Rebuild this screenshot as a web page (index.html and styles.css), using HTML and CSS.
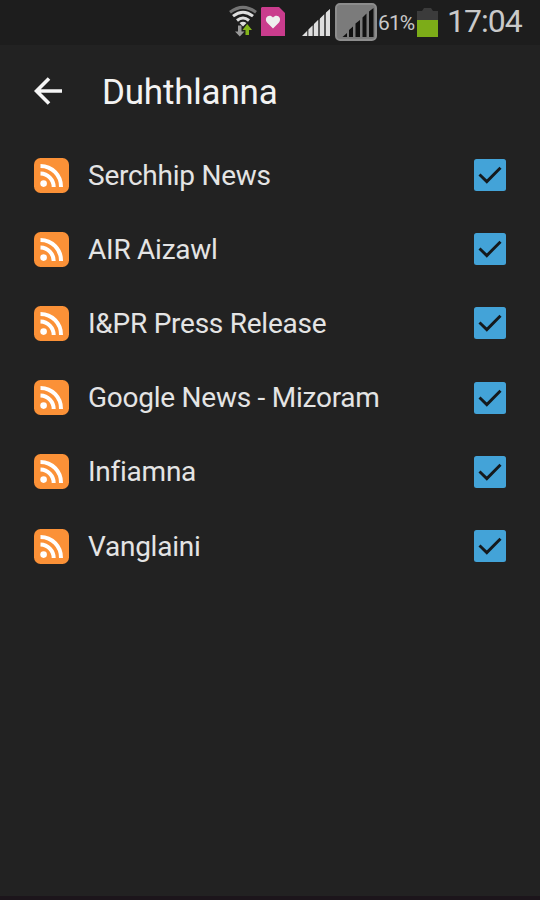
FILE: index.html
```html
<!DOCTYPE html>
<html lang="en">
<head>
    <meta charset="UTF-8">
    <meta name="viewport" content="width=device-width, initial-scale=1.0">
    <title>Duhthlanna</title>
    <link rel="stylesheet" href="styles.css">
</head>
<body>

    <!-- shared icons -->
    <svg class="sprite" width="0" height="0">
        <symbol id="rss" viewBox="0 0 35 35">
            <rect width="35" height="35" rx="6.500" fill="#fb9137"/>
            <circle cx="9.6" cy="25.600" r="3.3" fill="#fff"/>
            <path d="M6.500 15.500A13.500 13.500 0 0 1 19.700 29M6.500 8A20.500 20.500 0 0 1 27 29" fill="none" stroke="#fff" stroke-width="4"/>
        </symbol>
        <symbol id="check" viewBox="0 0 32 32">
            <rect width="32" height="32" rx="2.500" fill="#43a3d8"/>
            <path d="M5.500 15.500L12.800 22.600L26.500 8.800" fill="none" stroke="#15191c" stroke-width="2.900"/>
        </symbol>
    </svg>

    <div class="status-bar">
        <svg class="wifi" width="28" height="32" viewBox="0 0 28 32">
            <path d="M1 7.200Q14 -2.500 27 7.200" fill="none" stroke="#747474" stroke-width="3"/>
            <path d="M4 11.200Q14 3.200 24 11.200M8 15.500Q14 10.500 20 15.500" fill="none" stroke="#dedede" stroke-width="3"/>
            <path d="M10.500 18Q14 15.500 17.500 18L14 21.500z" fill="#dedede"/>
            <path d="M9 20.500h3.500v6h3L10.800 31.500L6 26.500h3z" fill="#999"/>
            <path d="M16.500 30H20v-5h3l-4.800-6-4.700 6h3z" fill="#83b51b"/>
        </svg>
        <svg class="heart" width="24" height="29" viewBox="0 0 24 29">
            <path d="M1 0H18L24 6V29H0V1z" fill="#ca3c8d"/>
            <path d="M12 21.500L6 15.500C2.500 10.500 8.500 6 12 10.500C15.500 6 21.500 10.500 18 15.500z" fill="#eee"/>
        </svg>
        <svg class="signal" width="28" height="27" viewBox="0 0 28 27">
            <path d="M0 27L5 22V27z" fill="#dedede"/>
            <path d="M5 27V22L28 0V27z" fill="#555"/>
            <path d="M6.500 27V20.500L10.500 16.500V27zM12 27V15L16 11V27zM18 27V9.500L22 5.500V27zM24 27V3.500L28 0V27z" fill="#dedede"/>
        </svg>
        <svg class="sim" width="42" height="38" viewBox="0 0 42 38">
            <rect x="1" y="1" width="40" height="36" rx="4" fill="#7b7b7b" stroke="#8d8d8d" stroke-width="2"/>
            <path d="M7.500 34L12 30V34zM14 34V27L18 23.500V34zM20.500 34V20.500L25 17V34zM27.500 34V14.500L31.500 10.500V34zM34 34V8.500L38.500 5V34z" fill="#111"/>
        </svg>
        <span class="percent">61%</span>
        <svg class="battery" width="21" height="29" viewBox="0 0 21 29">
            <path d="M0 13V3H5L7 0H14L16 3H21V13z" fill="#3b3b3b"/>
            <path d="M0 12H21V29H0z" fill="#7cac18"/>
        </svg>
        <span class="clock">17:04</span>
    </div>

    <div class="toolbar">
        <svg width="29" height="28" viewBox="0 0 29 28">
            <path d="M28 14H3M15 1.500L2.500 14L15 26.500" fill="none" stroke="#f5f5f5" stroke-width="3.600"/>
        </svg>
        <h1>Duhthlanna</h1>
    </div>

    <ul class="feeds">
        <li>
            <svg class="rss"><use href="#rss"/></svg>
            <span class="name">Serchhip News</span>
            <svg class="check"><use href="#check"/></svg>
        </li>
        <li>
            <svg class="rss"><use href="#rss"/></svg>
            <span class="name">AIR Aizawl</span>
            <svg class="check"><use href="#check"/></svg>
        </li>
        <li>
            <svg class="rss"><use href="#rss"/></svg>
            <span class="name">I&amp;PR Press Release</span>
            <svg class="check"><use href="#check"/></svg>
        </li>
        <li>
            <svg class="rss"><use href="#rss"/></svg>
            <span class="name">Google News - Mizoram</span>
            <svg class="check"><use href="#check"/></svg>
        </li>
        <li>
            <svg class="rss"><use href="#rss"/></svg>
            <span class="name">Infiamna</span>
            <svg class="check"><use href="#check"/></svg>
        </li>
        <li>
            <svg class="rss"><use href="#rss"/></svg>
            <span class="name">Vanglaini</span>
            <svg class="check"><use href="#check"/></svg>
        </li>
    </ul>

</body>
</html>
```

FILE: styles.css
```css
* {
    box-sizing: border-box;
    margin: 0;
    padding: 0;
}

body {
    font-family: Roboto, sans-serif;
    background: #222;
    color: #e4e4e4;
    height: 100vh;
    overflow: hidden;
    border-bottom: 4px solid #1c151b;
}

svg {
    display: block;
    flex: none;
}

.sprite {
    position: absolute;
}

.status-bar {
    display: flex;
    align-items: flex-start;
    height: 45px;
    padding-left: 229px;
    background: #1d1d1d;
    color: #c9c9c9;
}

.wifi {
    margin-top: 5px;
}

.heart {
    margin: 7px 0 0 4px;
}

.signal {
    margin: 9px 0 0 17px;
}

.sim {
    margin: 3px 0 0 5px;
}

.percent {
    width: 40px;
    padding-left: 1px;
    font-size: 21px;
    line-height: 46px;
    letter-spacing: -0.9px;
}

.battery {
    margin-top: 8px;
}

.clock {
    margin-left: 9px;
    font-size: 32px;
    line-height: 43px;
    letter-spacing: -1px;
    white-space: nowrap;
}

.toolbar {
    display: flex;
    align-items: center;
    height: 93px;
    padding: 0 0 2px 34px;
}

.toolbar h1 {
    margin-left: 39px;
    padding-top: 3px;
    font-size: 35px;
    font-weight: normal;
    letter-spacing: -0.2px;
    color: #f3f3f3;
}

.feeds {
    list-style: none;
}

.feeds li {
    display: flex;
    align-items: center;
    height: 74.2px;
    padding: 0 34px;
}

.rss {
    width: 35px;
    height: 35px;
}

.name {
    flex: 1;
    margin-left: 19px;
    font-size: 28px;
    letter-spacing: -0.25px;
    white-space: nowrap;
}

.check {
    width: 32px;
    height: 32px;
}
```
